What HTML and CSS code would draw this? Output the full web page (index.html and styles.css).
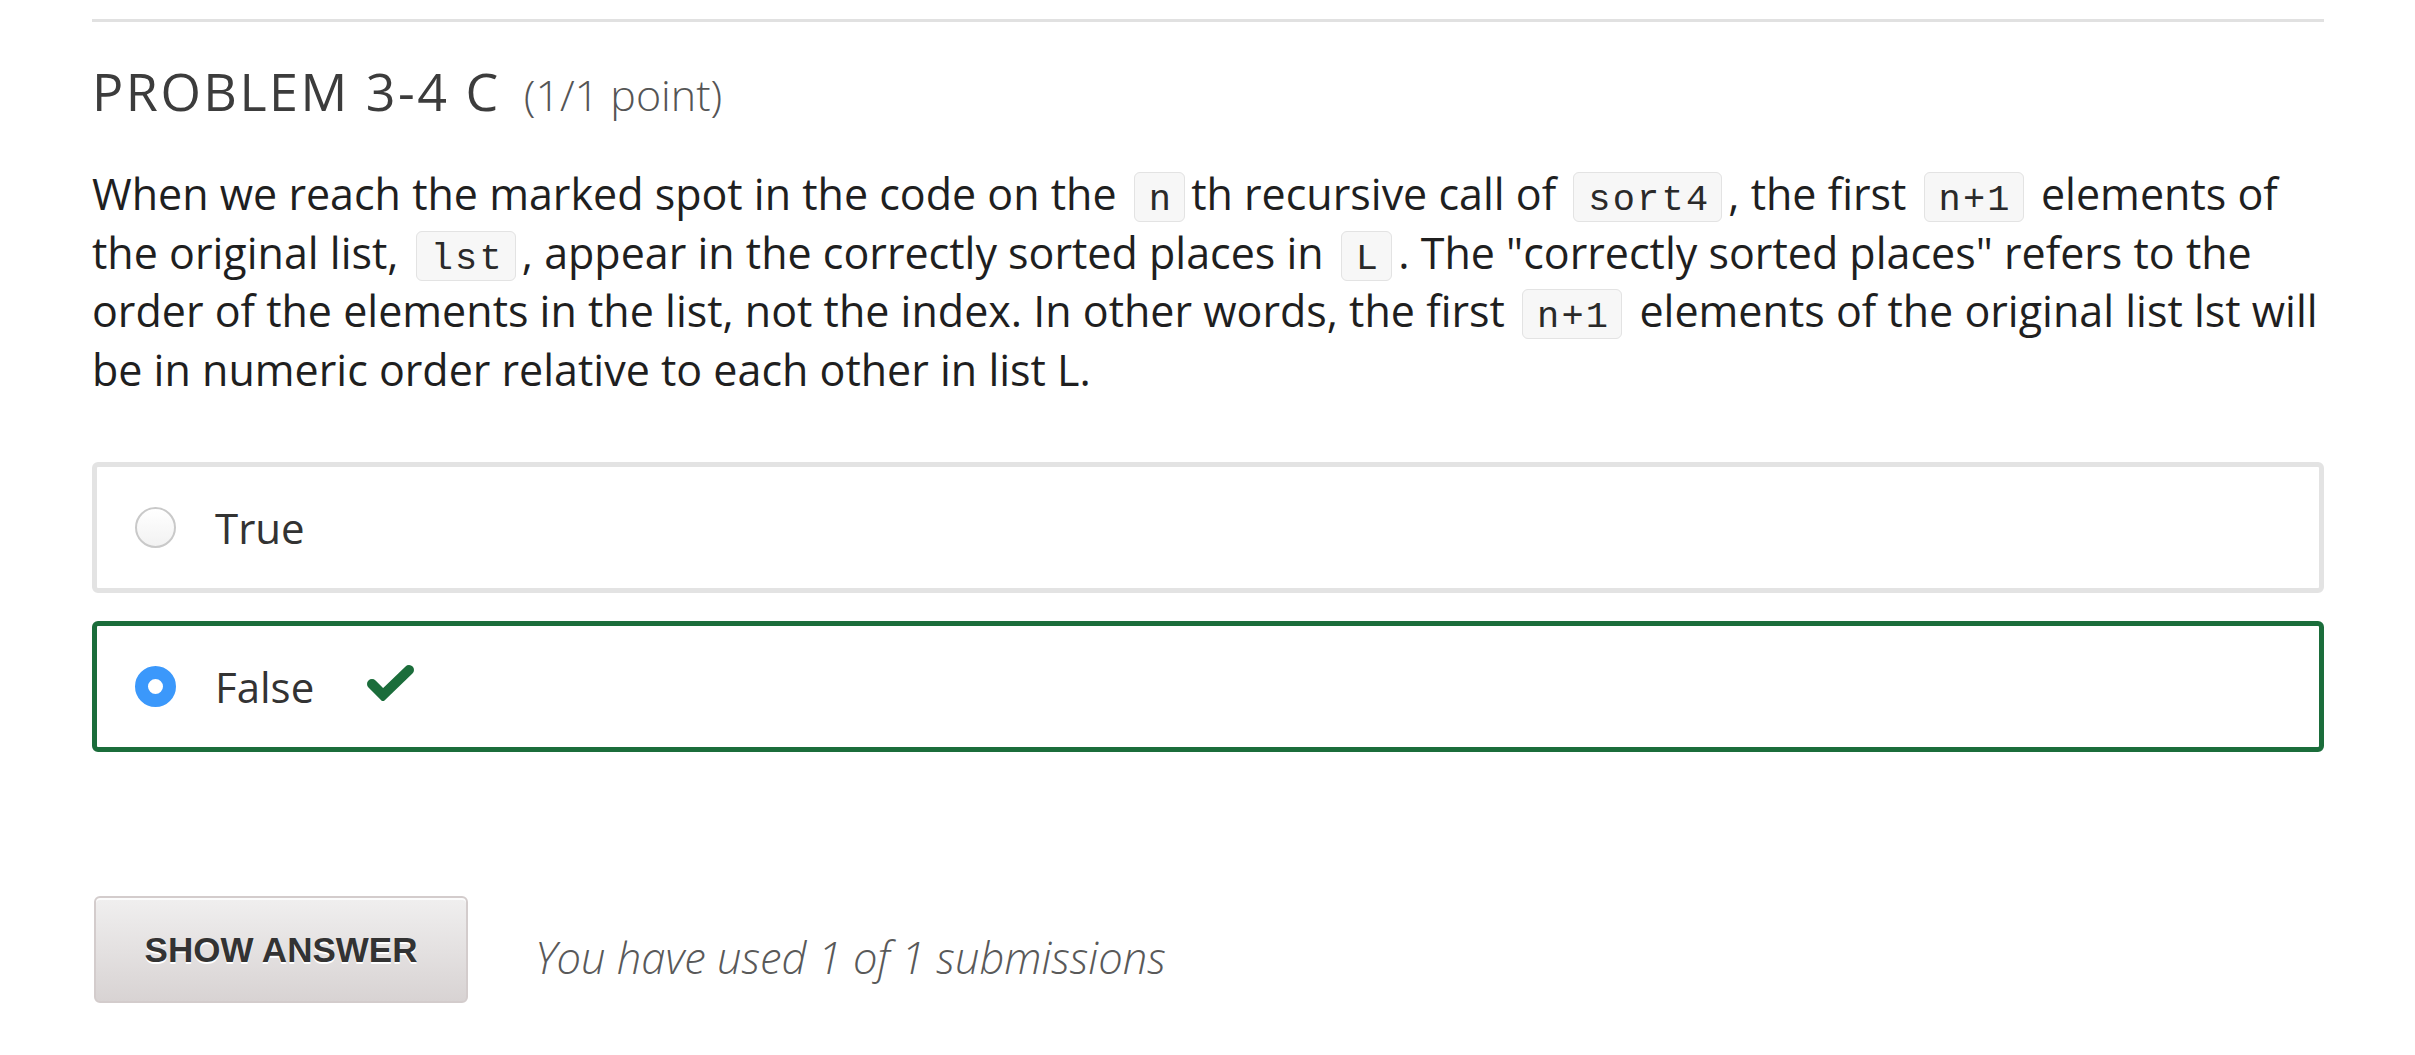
FILE: index.html
```html
<!DOCTYPE html>
<html lang="en">
<head>
<meta charset="utf-8">
<title>Problem 3-4 C</title>
<link rel="stylesheet" href="styles.css">
</head>
<body>
<div class="page">
  <section class="problem">
    <h2 class="problem-header">PROBLEM 3-4 C <span class="points">(1/1 point)</span></h2>
    <p class="prompt">When we reach the marked spot in the code on the <code>n</code>th recursive call of <code>sort4</code>, the first <code>n+1</code> elements of the original list, <code>lst</code>, appear in the correctly sorted places in <code>L</code>. The "correctly sorted places" refers to the order of the elements in the list, not the index. In other words, the first <code>n+1</code> elements of the original list lst will be in numeric order relative to each other in list L.</p>
    <div class="choices">
      <label class="choice">
        <span class="radio"></span>
        <span class="choice-text">True</span>
      </label>
      <label class="choice choice-correct">
        <span class="radio radio-checked"></span>
        <span class="choice-text">False</span>
        <svg class="check" width="48" height="36" viewBox="0 0 48 36" aria-hidden="true"><polyline points="5,19 16,30 42,5" fill="none" stroke="#1b6d3b" stroke-width="10" stroke-linecap="round" stroke-linejoin="miter"/></svg>
      </label>
    </div>
    <div class="actions">
      <button class="show-answer" type="button">SHOW ANSWER</button>
      <span class="submissions">You have used 1 of 1 submissions</span>
    </div>
  </section>
</div>
</body>
</html>
```
FILE: styles.css
```css
html, body {
  margin: 0;
  padding: 0;
  background: #ffffff;
}

body {
  font-family: "Open Sans", "Noto Sans", sans-serif;
  color: #222222;
}

.page {
  padding: 19px 91px 0 92px;
}

.problem {
  border-top: 3px solid #e1e1e1;
}

.problem-header {
  margin: 38px 0 0 0;
  font-size: 52px;
  line-height: 62px;
  font-weight: 400;
  letter-spacing: 2.5px;
  color: #3c3c3c;
}

.points {
  margin-left: 7px;
  font-size: 43px;
  font-weight: 300;
  letter-spacing: 0;
  color: #555555;
}

.prompt {
  margin: 39px 0 0 0;
  font-size: 43px;
  line-height: 58.6px;
  color: #1f1f1f;
}

.prompt code {
  font-family: "Liberation Mono", "DejaVu Sans Mono", monospace;
  font-size: 37px;
  line-height: 1;
  letter-spacing: 2.2px;
  padding: 6px 11px 0 14px;
  margin: 0 6px;
  background: #f7f7f7;
  border: 1px solid #e3e3e3;
  border-radius: 6px;
  color: #2a2a2a;
}

.choices {
  margin-top: 63px;
  display: flex;
  flex-direction: column;
  gap: 28px;
}

.choice {
  display: flex;
  align-items: center;
  height: 121px;
  padding: 0 38px;
  border: 5px solid #e3e3e3;
  border-radius: 6px;
  font-size: 42px;
  color: #333333;
}

.choice-correct {
  border-color: #1b6d3b;
}

.radio {
  box-sizing: border-box;
  width: 41px;
  height: 41px;
  border-radius: 50%;
  border: 2px solid #c9c9c9;
  background: linear-gradient(#ffffff, #f2f2f2);
  flex: none;
}

.radio-checked {
  border: 13px solid #3b98fb;
  background: #ffffff;
}

.choice-text {
  margin-left: 39px;
}

.check {
  margin-left: 53px;
  margin-top: -8px;
}

.actions {
  margin-top: 144px;
  display: flex;
  align-items: center;
  gap: 67px;
}

.show-answer {
  width: 374px;
  height: 107px;
  margin-left: 2px;
  border: 2px solid #d3cccc;
  border-radius: 6px;
  background: linear-gradient(#f0efef, #d8d3d3);
  box-shadow: inset 0 2px 0 rgba(255, 255, 255, 0.8);
  font-family: "Liberation Sans", Arial, sans-serif;
  font-weight: 700;
  font-size: 35px;
  color: #333333;
  text-shadow: 0 2px 0 #ffffff;
  letter-spacing: 0;
  padding: 0;
}

.submissions {
  font-style: italic;
  font-weight: 300;
  font-size: 43.5px;
  color: #595959;
  padding-top: 16px;
}
```
